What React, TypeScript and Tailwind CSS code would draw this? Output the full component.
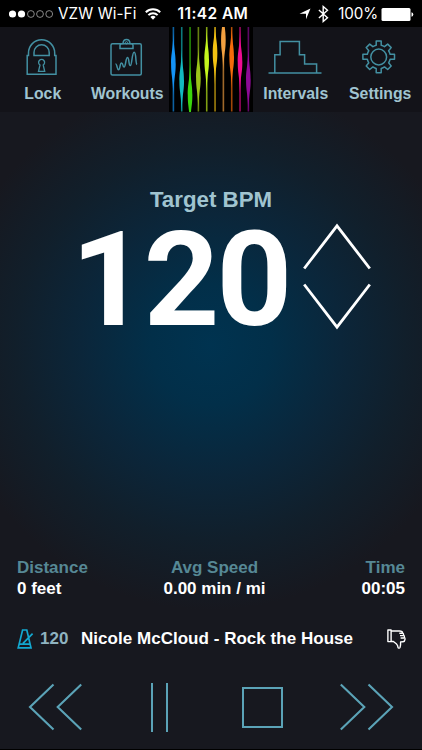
import type { ReactNode } from "react";

const beams = [
  { color: "#1493f5", y: 37 },
  { color: "#13b9c0", y: 54 },
  { color: "#3bd60c", y: 68 },
  { color: "#9cc31a", y: 51 },
  { color: "#c4f51d", y: 33 },
  { color: "#f2c112", y: 26 },
  { color: "#f2a040", y: 13 },
  { color: "#f56b0b", y: 30 },
  { color: "#ee0b92", y: 35 },
  { color: "#8d0a96", y: 53 },
];

function StatusBar() {
  return (
    <div className="flex h-[27px] items-center bg-black pl-[9px] pr-[8px] pt-px font-[Inter,sans-serif] text-white">
      <svg width="45" height="10" viewBox="0 0 45 10" className="shrink-0">
        <circle cx="3.5" cy="5" r="3.6" fill="white" />
        <circle cx="12.5" cy="5" r="3.6" fill="white" />
        {[21.9, 31, 40.2].map((cx) => (
          <circle key={cx} cx={cx} cy="5" r="3.4" fill="none" stroke="#aaa" strokeWidth="0.8" />
        ))}
      </svg>
      <span className="ml-[4px] w-[79px] whitespace-nowrap text-[15.2px] tracking-[0.1px]">VZW Wi-Fi</span>
      <svg width="16" height="12" viewBox="0 0 16 12" className="ml-[8px] shrink-0" fill="none" stroke="white" strokeWidth="2">
        <path d="M.8 4.3a10.2 10.2 0 0 1 14.4 0M3.4 7.1a6.5 6.5 0 0 1 9.2 0" />
        <path d="M8 11.8 5.4 9.1a3.7 3.7 0 0 1 5.2 0Z" fill="white" stroke="none" />
      </svg>
      <span className="ml-[17px] w-[72px] whitespace-nowrap text-[15.5px] font-semibold tracking-[0.4px]">11:42 AM</span>
      <svg width="12" height="12" viewBox="0 0 12 12" className="ml-[50px] shrink-0">
        <path d="M11.5.5 7 11.3V5.7H.5Z" fill="white" />
      </svg>
      <svg width="11" height="18" viewBox="0 0 11 18" className="ml-[7px] shrink-0" fill="none" stroke="white" strokeWidth="1.4">
        <path d="M.9 5 9.5 12.8 5.2 16.5V1.5L9.5 5.2.9 13" />
      </svg>
      <span className="ml-[9px] w-[41px] whitespace-nowrap text-[15.2px] tracking-[-0.1px]">100%</span>
      <svg width="33" height="13" viewBox="0 0 33 13" className="ml-[2px] shrink-0">
        <rect x=".5" width="29" height="13" rx="1.5" fill="white" />
        <path d="M30.5 4.2q1.8.5 1.8 2.3t-1.8 2.3Z" fill="white" />
      </svg>
    </div>
  );
}

function NavItem({ label, children }: { label: string; children: ReactNode }) {
  return (
    <button className="flex flex-1 flex-col items-center pt-[10px]">
      <svg width="60" height="42" viewBox="0 0 60 42" fill="none" stroke="#4390a2" strokeWidth="1.5">
        {children}
      </svg>
      <span className="mt-[4px] whitespace-nowrap pl-[1px] text-[15.8px] font-bold leading-[22px] text-[#a0c4d0]">{label}</span>
    </button>
  );
}

function Beams() {
  return (
    <svg width="84" height="85" viewBox="0 0 84 85" className="shrink-0 bg-black">
      {beams.map(({ color, y }, i) => {
        const x = 4.4 + i * 8.33;
        return (
          <g key={color} fill={color}>
            <rect x={x - 0.8} width="1.6" height="84.5" opacity="0.65" />
            <path
              d={`M${x} ${y - 32}C${x + 0.6} ${y - 12} ${x + 2.3} ${y - 12} ${x + 2.3} ${y}S${x + 0.6} ${y + 12} ${x} ${y + 32}C${x - 0.6} ${y + 12} ${x - 2.3} ${y + 12} ${x - 2.3} ${y}S${x - 0.6} ${y - 12} ${x} ${y - 32}Z`}
            />
          </g>
        );
      })}
    </svg>
  );
}

function Header() {
  return (
    <header className="flex h-[85px] bg-[#131319]">
      <NavItem label="Lock">
        <path d="M15.2 18.6h1.3V15.9a13.1 13.1 0 0 1 26.2 0v2.7h1.3v18.7H15.2Z" />
        <path d="M22 18.6v-3.2a7.6 7.6 0 0 1 15.2 0v3.2Z" />
        <path d="M28 28a3 3 0 1 1 3.2 0l1.5 6.4h-6.2Z" strokeWidth="1.3" />
      </NavItem>
      <NavItem label="Workouts">
        <rect x="14" y="6.7" width="30.3" height="31.4" rx="1.5" />
        <path d="M23 11.5V8.2q0-1.7 3-1.8.4-3.8 3.5-3.8t3.5 3.8q3 .1 3 1.8v3.3Z" />
        <circle cx="29.5" cy="5.8" r="1.2" strokeWidth="1" />
        <path d="M18.5 27c1.6-.2 1.6 5.7 3 5.7 1.8 0 1.2-6.7 3-6.7s1 4 2.6 4 1.6-9.4 3.4-9.4 1 8 2.8 8 1.6-13.3 3.8-13.3c2.4 0 1.2 11.2 2.9 12.2" />
      </NavItem>
      <Beams />
      <NavItem label="Intervals">
        <path d="M3.5 36h53M9.8 36V17.7h5.3V4.5h19.3v13.2h5.2v9.2h12v9.1" />
      </NavItem>
      <NavItem label="Settings">
        <path
          d="M26.2 4h5v4.2q1.9.5 3.3 1.5l3.2-2.6 3.5 3.5-2.6 3.2q1 1.4 1.5 3.5h4.4v5h-4.4q-.5 2-1.5 3.5l2.6 3.2-3.5 3.5-3.2-2.6q-1.4 1-3.3 1.5v4.4h-5v-4.4q-1.9-.5-3.3-1.5l-3.2 2.6-3.5-3.5 2.6-3.2q-1-1.5-1.5-3.5h-4.4v-5h4.4q.5-2.1 1.5-3.5l-2.6-3.2 3.5-3.5 3.2 2.6q1.4-1 3.3-1.5Z"
          strokeLinejoin="round"
        />
        <circle cx="28.7" cy="20" r="7.9" />
      </NavItem>
    </header>
  );
}

function Stat({ label, value, className }: { label: string; value: string; className: string }) {
  return (
    <div className={`flex flex-col text-[17px] font-bold leading-[21px] ${className}`}>
      <span className="text-[#568895]">{label}</span>
      <span className="text-white">{value}</span>
    </div>
  );
}

function Track() {
  return (
    <div className="mt-[29px] flex h-[22px] items-center pl-[17px] pr-[16px] text-[17px] font-bold">
      <svg width="17" height="21" viewBox="0 0 17 21" fill="none" stroke="#13a8d0" strokeWidth="1.7">
        <path d="M5.6 1h4.2L14 18.8H1.2ZM2.2 15.2h10.8M6 14.4 15.6 4.6" />
      </svg>
      <span className="ml-[6px] w-[28px] text-[#8fb3c0]">120</span>
      <span className="ml-[13px] whitespace-nowrap tracking-[0.03px] text-white">Nicole McCloud - Rock the House</span>
      <svg width="19" height="21" viewBox="0 0 19 21" className="ml-auto" fill="none" stroke="white" strokeWidth="1.4" strokeLinejoin="round">
        <path d="M.9 1h3.2v11.6H.9ZM4.1 2h8.4q3 0 3.2 2 1 .6.9 2.1 1 .7.8 2.1.8.7.6 2.2-.2 2.2-2 2.3l-2.4.2q.2 3.6-.6 5.6-.7 1.2-1.9.2-.2-2.4-1.8-3.9L6.4 12.5H4.1M12.3 4.2h3.2M13 6.6h3.4M13.6 9h3.5" />
      </svg>
    </div>
  );
}

function Controls() {
  return (
    <div className="mt-[32px] flex items-center pl-[28px] text-[#5ba3b7]">
      <svg width="54" height="50" viewBox="0 0 54 50" fill="none" stroke="currentColor" strokeWidth="2.1">
        <path d="M25.5 2.4 2 25l23.5 22.6M53.2 2.4 29.7 25l23.5 22.6" />
      </svg>
      <div className="ml-[69px] flex h-[49px] w-[17px] justify-between">
        <div className="w-[2px] bg-current" />
        <div className="w-[2px] bg-current" />
      </div>
      <div className="ml-[74px] size-[41px] border-2 border-current" />
      <svg width="54" height="50" viewBox="0 0 54 50" className="ml-[57px]" fill="none" stroke="currentColor" strokeWidth="2.1">
        <path d="M.8 2.4 24.3 25 .8 47.6M28.5 2.4 52 25 28.5 47.6" />
      </svg>
    </div>
  );
}

export default function App() {
  return (
    <div className="flex h-[750px] w-[422px] flex-col overflow-hidden border-b border-black bg-[#17181f] bg-[radial-gradient(circle_at_211px_345px,#003350_0px,#022f49_60px,#0b263a_130px,#111f2b_195px,#17181f_265px)] font-['Liberation_Sans',Arial,sans-serif]">
      <StatusBar />
      <Header />
      <main className="flex h-[445px] flex-col">
        <h1 className="mt-[74px] text-center text-[22.3px] font-bold leading-[28px] text-[#a0c4d0]">Target BPM</h1>
        <div className="flex pl-[71px]">
          <span className="w-[221px] whitespace-nowrap font-[Roboto,sans-serif] text-[132px] font-bold leading-[132px] tracking-[-3px] text-white">120</span>
          <svg width="72" height="110" viewBox="0 0 72 110" className="ml-[10px] mt-[8px]" fill="none" stroke="white" strokeWidth="2.8">
            <path d="M2.2 46.5 35 3.8l32.8 42.7M2.2 62.5 35 105.2l32.8-42.7" />
          </svg>
        </div>
      </main>
      <div className="grid grid-cols-3 px-[17px]">
        <Stat label="Distance" value="0 feet" className="items-start" />
        <Stat label="Avg Speed" value="0.00 min / mi" className="items-center whitespace-nowrap pl-[7px]" />
        <Stat label="Time" value="00:05" className="items-end" />
      </div>
      <Track />
      <Controls />
    </div>
  );
}
